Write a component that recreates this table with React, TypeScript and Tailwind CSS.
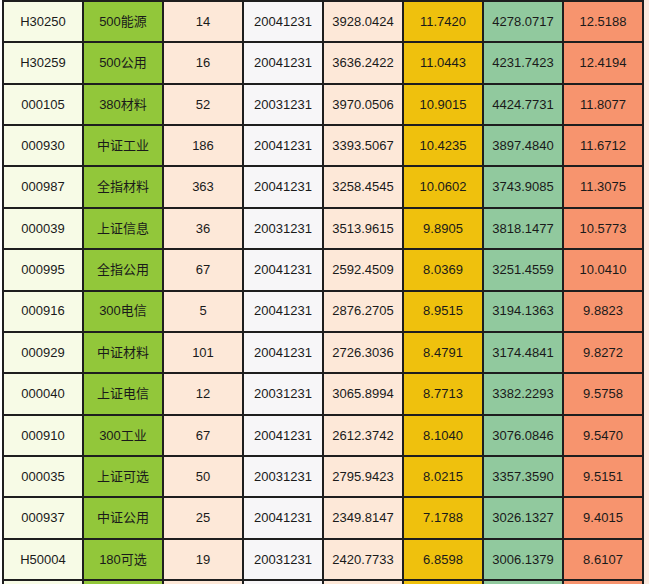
const ROWS: string[][] = [
  ["H30250", "500能源", "14", "20041231", "3928.0424", "11.7420", "4278.0717", "12.5188"],
  ["H30259", "500公用", "16", "20041231", "3636.2422", "11.0443", "4231.7423", "12.4194"],
  ["000105", "380材料", "52", "20031231", "3970.0506", "10.9015", "4424.7731", "11.8077"],
  ["000930", "中证工业", "186", "20041231", "3393.5067", "10.4235", "3897.4840", "11.6712"],
  ["000987", "全指材料", "363", "20041231", "3258.4545", "10.0602", "3743.9085", "11.3075"],
  ["000039", "上证信息", "36", "20031231", "3513.9615", "9.8905", "3818.1477", "10.5773"],
  ["000995", "全指公用", "67", "20041231", "2592.4509", "8.0369", "3251.4559", "10.0410"],
  ["000916", "300电信", "5", "20041231", "2876.2705", "8.9515", "3194.1363", "9.8823"],
  ["000929", "中证材料", "101", "20041231", "2726.3036", "8.4791", "3174.4841", "9.8272"],
  ["000040", "上证电信", "12", "20031231", "3065.8994", "8.7713", "3382.2293", "9.5758"],
  ["000910", "300工业", "67", "20041231", "2612.3742", "8.1040", "3076.0846", "9.5470"],
  ["000035", "上证可选", "50", "20031231", "2795.9423", "8.0215", "3357.3590", "9.5151"],
  ["000937", "中证公用", "25", "20041231", "2349.8147", "7.1788", "3026.1327", "9.4015"],
  ["H50004", "180可选", "19", "20031231", "2420.7733", "6.8598", "3006.1379", "8.6107"],
  ["", "", "", "", "", "", "", ""],
];

// one fill per column, as in the sheet
const COL_BG = [
  "bg-[#f7fbe6]",
  "bg-[#92c73a]",
  "bg-[#fde8d8]",
  "bg-[#f7f6f8]",
  "bg-[#fde8d8]",
  "bg-[#efc10d]",
  "bg-[#91c99e]",
  "bg-[#f7946e]",
];

export default function App() {
  return (
    <div
      className="flex h-[584px] w-[649px] overflow-hidden bg-white"
      style={{ fontFamily: '"Liberation Sans", "Noto Sans CJK SC", sans-serif' }}
    >
      <div className="ml-[2px] shrink-0 self-start bg-[#1e1e1e] p-[2px]">
        <div className="grid grid-cols-[repeat(8,78px)] auto-rows-[39.36px] gap-[2px]">
          {ROWS.map((row, r) =>
            row.map((cell, c) => (
              <div
                key={`${r}-${c}`}
                className={`flex items-center justify-center text-[13px] text-[#1a1a1a] ${COL_BG[c]}`}
              >
                {cell}
              </div>
            )),
          )}
        </div>
      </div>
      <div className="flex-1 bg-[#fbeadf]" />
    </div>
  );
}
